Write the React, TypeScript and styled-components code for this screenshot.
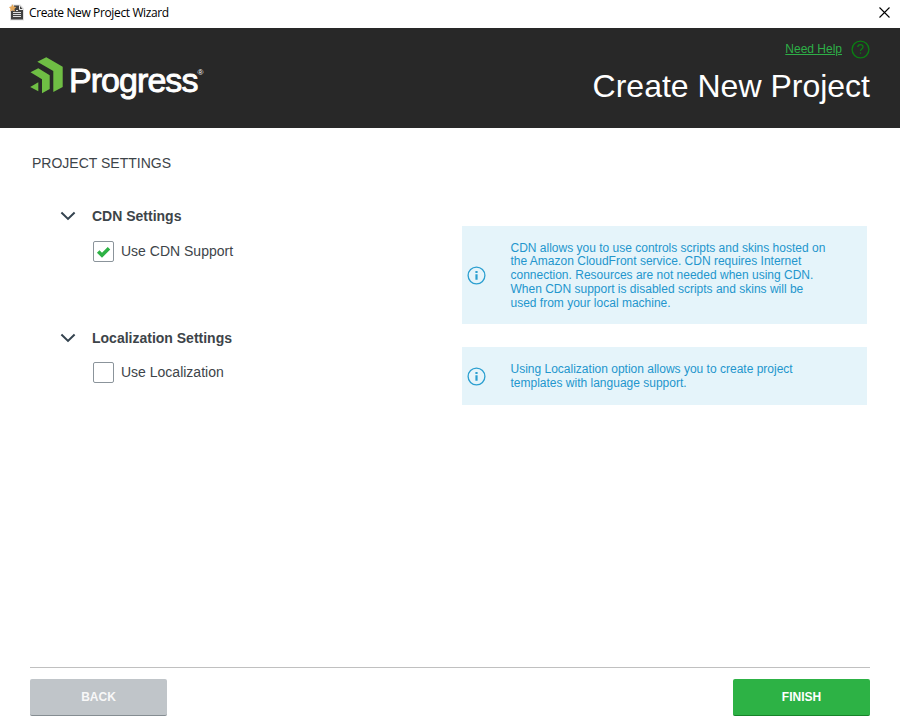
import React from "react";
import styled, { createGlobalStyle } from "styled-components";

const GlobalStyle = createGlobalStyle`
  *, *::before, *::after { box-sizing: border-box; }
  body {
    margin: 0;
    background: #fff;
    font-family: "Liberation Sans", Arial, sans-serif;
  }
  svg { display: block; flex: none; }
`;

const Window = styled.div`
  display: flex;
  flex-direction: column;
  width: 900px;
  height: 727px;
  overflow: hidden;
  background: #fff;
  color: #3d4449;
`;

const TitleBar = styled.div`
  display: flex;
  align-items: center;
  height: 28px;
  padding: 0 10px 3px 9px;
`;

const WindowTitle = styled.span`
  flex: 1;
  margin-left: 4px;
  color: #000;
  font: 12px/16px "Open Sans", sans-serif;
  letter-spacing: -0.37px;
`;

const IconButton = styled.button`
  padding: 0;
  border: 0;
  background: none;
`;

const Header = styled.header`
  display: flex;
  justify-content: space-between;
  height: 100px;
  padding: 0 30px;
  background: #282828;
`;

const Brand = styled.div`
  display: flex;
  padding-top: 28px;
`;

const BrandName = styled.span`
  margin: 5px 0 0 5px;
  color: #fff;
  font-size: 34px;
  line-height: 38px;
  letter-spacing: -0.95px;
  -webkit-text-stroke: 0.9px #fff;
`;

const Registered = styled.span`
  margin: 11px 0 0 0;
  color: #fff;
  font-size: 8px;
  line-height: 12px;
`;

const HeaderRight = styled.div`
  display: flex;
  flex-direction: column;
  align-items: flex-end;
  padding-top: 12px;
`;

const Help = styled.div`
  display: flex;
  align-items: center;
  gap: 9px;
  height: 18px;
`;

const HelpLink = styled.a`
  color: #2eaf47;
  font-size: 12px;
  line-height: 14px;
  text-decoration: underline;
`;

const PageTitle = styled.h1`
  margin: 10px 0 0;
  color: #fff;
  font-size: 32px;
  font-weight: 400;
  line-height: 37px;
`;

const Main = styled.main`
  flex: 1;
  padding: 27px 33px 0 32px;
`;

const SectionLabel = styled.h2`
  margin: 0 0 35px;
  font-size: 14px;
  font-weight: 400;
  line-height: 16px;
`;

const Group = styled.section<{ $height: number }>`
  display: grid;
  grid-template-columns: 430px 405px;
  align-items: start;
  height: ${(p) => p.$height}px;
`;

const GroupHeading = styled.div`
  display: flex;
  align-items: center;
  gap: 16px;
  height: 20px;
  padding-left: 28px;
`;

const GroupTitle = styled.h3`
  margin: 0;
  font-size: 14px;
  font-weight: 700;
  line-height: 20px;
`;

const Option = styled.label<{ $gap: number }>`
  display: flex;
  align-items: flex-start;
  gap: 7px;
  margin: ${(p) => p.$gap}px 0 0 61px;
  font-size: 14px;
  line-height: 20px;
`;

const CheckBox = styled.span`
  display: flex;
  align-items: center;
  justify-content: center;
  width: 21px;
  height: 21px;
  border: 1px solid #8b949b;
  border-radius: 2px;
`;

const InfoPanel = styled.aside<{ $height: number; $offset: number }>`
  display: flex;
  align-items: center;
  height: ${(p) => p.$height}px;
  margin-top: ${(p) => p.$offset}px;
  padding-left: 5px;
  background: #e5f4fa;
  color: #2396cd;
`;

const InfoText = styled.p<{ $top: number }>`
  margin: 0 0 0 24.5px;
  padding-top: ${(p) => p.$top}px;
  font-size: 12px;
  line-height: 13.8px;
  white-space: pre;
`;

const Footer = styled.footer`
  display: flex;
  justify-content: space-between;
  height: 60px;
  margin: 0 30px;
  padding-top: 11px;
  border-top: 1px solid #c0c0c0;
`;

const Button = styled.button<{ $primary?: boolean }>`
  width: 137px;
  height: 37px;
  padding: 0 0 1px;
  border: 0;
  border-bottom: 1px solid ${(p) => (p.$primary ? "#168329" : "#858d92")};
  border-radius: 2px;
  background: ${(p) => (p.$primary ? "#2db245" : "#c0c5c9")};
  color: ${(p) => (p.$primary ? "#fff" : "#f8f8f8")};
  font: 700 12px/14px "Liberation Sans", Arial, sans-serif;
`;

const DocumentIcon = () => (
  <svg width="16" height="17" viewBox="0 0 16 17">
    <path d="M2 .5h9.500L15 4.500V16.500H1V6z" fill="#e1e1e1" />
    <path d="M5 1.500h5.500L14 5.500V15.500H2V7l3-1z" fill="#414141" />
    <path d="M10.500 1.500v4H14" fill="none" stroke="#eee" />
    <path d="M4 8.500h8M4 10.500h8M4 12.500h8M7 6.500h2" stroke="#ddd" strokeWidth="1" />
    <path d="M3.500.2l1.200 2.400 2.700.4-2 1.900.5 2.700-2.400-1.300L1.100 7.600l.5-2.700L0 3l2.300-.4z" fill="#e5a85a" />
  </svg>
);

const CloseIcon = () => (
  <svg width="11" height="11" viewBox="0 0 11 11">
    <path d="M.5.5l10 10M10.500.5l-10 10" stroke="#000" strokeWidth="1.100" />
  </svg>
);

const BrandMark = () => (
  <svg width="34" height="38" viewBox="0 0 34 38">
    <g fill="#6fbe44">
      <path d="M7.300 5.800L16.300 1.200l16.400 9.500v20.300l-9.400 5V15.100z" />
      <path d="M.5 16.300L8.300 12.300l11.400 6.900v13.800L12 37.300V23.300z" />
      <path d="M.2 31.100l8.100-4.900v9z" />
    </g>
  </svg>
);

const HelpIcon = () => (
  <svg width="19" height="19" viewBox="0 0 19 19" fill="none" stroke="#0b7d13">
    <circle cx="9.500" cy="9.500" r="8.400" strokeWidth="1.400" />
    <path d="M6.800 7.100c0-1.600 1-2.500 2.600-2.500S12 5.500 12 6.900c0 2-2.500 2-2.500 4.100M9.500 12.500v1.300" strokeWidth="1.300" />
  </svg>
);

const Chevron = () => (
  <svg width="16" height="10" viewBox="0 0 16 10">
    <path d="M1.400 1.500L8 7.900l6.600-6.400" fill="none" stroke="#34434f" strokeWidth="2" />
  </svg>
);

const CheckIcon = () => (
  <svg width="15" height="12" viewBox="0 0 15 12">
    <path d="M2.200 5.400l3.800 3.800 7-6.900" fill="none" stroke="#2db245" strokeWidth="3.600" />
  </svg>
);

const InfoIcon = () => (
  <svg width="19" height="19" viewBox="0 0 19 19" fill="none" stroke="#2b9fd0">
    <circle cx="9.500" cy="9.500" r="8.400" strokeWidth="1.300" />
    <path d="M9.500 5v2M9.500 8.300v5.500" strokeWidth="2.200" />
  </svg>
);

const groups = [
  {
    title: "CDN Settings",
    option: "Use CDN Support",
    checked: true,
    gap: 15,
    height: 122,
    panel: 98,
    panelOffset: 20,
    textTop: 2,
    lines: [
      "CDN allows you to use controls scripts and skins hosted on",
      "the Amazon CloudFront service. CDN requires Internet",
      "connection. Resources are not needed when using CDN.",
      "When CDN support is disabled scripts and skins will be",
      "used from your local machine.",
    ],
  },
  {
    title: "Localization Settings",
    option: "Use Localization",
    checked: false,
    gap: 14,
    height: 100,
    panel: 58,
    panelOffset: 19,
    textTop: 1,
    lines: [
      "Using Localization option allows you to create project",
      "templates with language support.",
    ],
  },
];

export default function App() {
  return (
    <>
      <GlobalStyle />
      <Window>
        <TitleBar>
          <DocumentIcon />
          <WindowTitle>Create New Project Wizard</WindowTitle>
          <IconButton aria-label="Close">
            <CloseIcon />
          </IconButton>
        </TitleBar>
        <Header>
          <Brand>
            <BrandMark />
            <BrandName>Progress</BrandName>
            <Registered>®</Registered>
          </Brand>
          <HeaderRight>
            <Help>
              <HelpLink>Need Help</HelpLink>
              <HelpIcon />
            </Help>
            <PageTitle>Create New Project</PageTitle>
          </HeaderRight>
        </Header>
        <Main>
          <SectionLabel>PROJECT SETTINGS</SectionLabel>
          {groups.map((g) => (
            <Group key={g.title} $height={g.height}>
              <div>
                <GroupHeading>
                  <Chevron />
                  <GroupTitle>{g.title}</GroupTitle>
                </GroupHeading>
                <Option $gap={g.gap}>
                  <CheckBox>{g.checked && <CheckIcon />}</CheckBox>
                  {g.option}
                </Option>
              </div>
              <InfoPanel $height={g.panel} $offset={g.panelOffset}>
                <InfoIcon />
                <InfoText $top={g.textTop}>{g.lines.join("\n")}</InfoText>
              </InfoPanel>
            </Group>
          ))}
        </Main>
        <Footer>
          <Button>BACK</Button>
          <Button $primary>FINISH</Button>
        </Footer>
      </Window>
    </>
  );
}
